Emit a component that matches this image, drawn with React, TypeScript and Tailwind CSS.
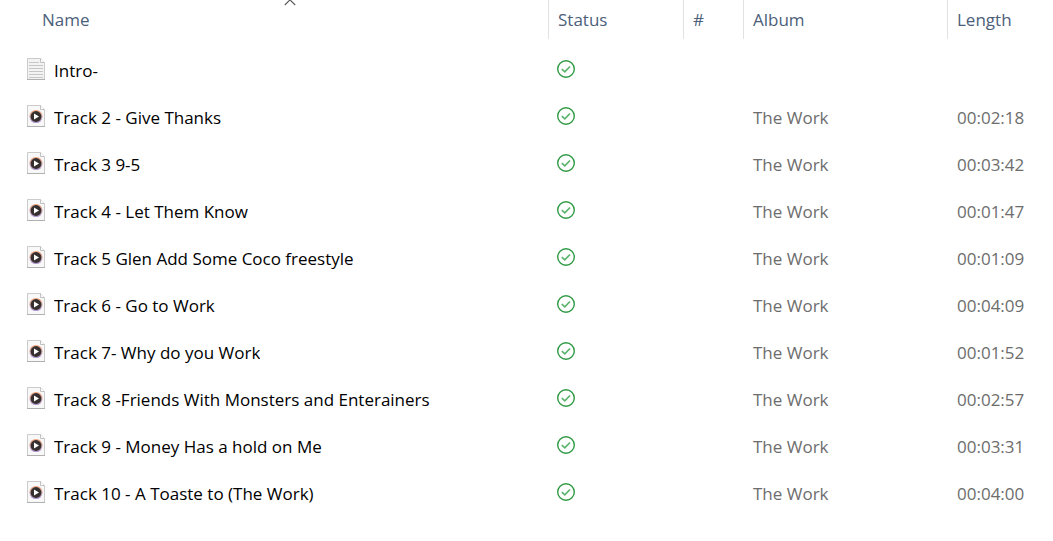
import { useState } from 'react';

interface Track {
  name: string;
  kind: 'text' | 'audio';
  album?: string;
  length?: string;
}

const tracks: Track[] = [
  { name: 'Intro-', kind: 'text' },
  { name: 'Track 2 - Give Thanks', kind: 'audio', album: 'The Work', length: '00:02:18' },
  { name: 'Track 3 9-5', kind: 'audio', album: 'The Work', length: '00:03:42' },
  { name: 'Track 4 - Let Them Know', kind: 'audio', album: 'The Work', length: '00:01:47' },
  { name: 'Track 5 Glen Add Some Coco freestyle', kind: 'audio', album: 'The Work', length: '00:01:09' },
  { name: 'Track 6 - Go to Work', kind: 'audio', album: 'The Work', length: '00:04:09' },
  { name: 'Track 7- Why do you Work', kind: 'audio', album: 'The Work', length: '00:01:52' },
  { name: 'Track 8 -Friends With Monsters and Enterainers', kind: 'audio', album: 'The Work', length: '00:02:57' },
  { name: 'Track 9 - Money Has a hold on Me', kind: 'audio', album: 'The Work', length: '00:03:31' },
  { name: 'Track 10 - A Toaste to (The Work)', kind: 'audio', album: 'The Work', length: '00:04:00' },
];

const columns = [
  { label: 'Status', width: 'w-[135px]' },
  { label: '#', width: 'w-[60px]' },
  { label: 'Album', width: 'w-[204px]' },
  { label: 'Length', width: 'w-[106px]' },
];

const Page = ({ fill }: { fill: string }) => (
  <>
    <path d="M.5.5h13l4 4v17H.5z" fill={fill} stroke="#cbcbcb" />
    <path d="M0 21.5h18" stroke="#b0b0b0" />
    <path d="M13.5.5v4h4" fill="#fff" stroke="#c0c0c0" />
  </>
);

const TextFileIcon = () => (
  <svg width="18" height="22" viewBox="0 0 18 22" aria-hidden="true">
    <Page fill="#f3f3f3" />
    <path d="M2 4.5h10M2 7.5h14M2 10.5h14M2 13.5h14M2 16.5h14M2 19.5h14" stroke="#c6c6c6" />
  </svg>
);

const AudioFileIcon = () => (
  <svg width="18" height="22" viewBox="0 0 18 22" aria-hidden="true">
    <defs>
      <linearGradient id="disc-ring" x1="0" y1="0" x2="0" y2="1">
        <stop offset="0" stopColor="#f0a27a" />
        <stop offset="0.55" stopColor="#d3aeb0" />
        <stop offset="1" stopColor="#a78fd0" />
      </linearGradient>
    </defs>
    <Page fill="#f8f8f9" />
    <circle cx="9" cy="11.5" r="6.6" fill="url(#disc-ring)" />
    <circle cx="9" cy="11.5" r="5.4" fill="#35302f" />
    <path d="M7 8.4v6.2l5-3.1z" fill="#fff" />
  </svg>
);

const SyncedIcon = () => (
  <svg width="18" height="18" viewBox="0 0 18 18" fill="none" role="img" aria-label="Available">
    <circle cx="9" cy="9" r="8.3" stroke="#2f9a44" strokeWidth="1.4" />
    <path d="M4.8 9.2l3 2.7 5.2-5.4" stroke="#5bb36c" strokeWidth="1.7" />
  </svg>
);

export default function App() {
  const [ascending, setAscending] = useState(true);
  const rows = ascending ? tracks : [...tracks].reverse();

  return (
    <main className="min-h-screen bg-white font-['Open_Sans','Noto_Sans',sans-serif] text-[17px] leading-6">
      <table className="w-full table-fixed border-collapse text-left">
        <thead className="text-[#4c607a]">
          <tr className="h-[47px] align-top">
            <th className="p-0 pl-8 font-normal">
              <button
                type="button"
                onClick={() => setAscending(!ascending)}
                className="relative flex h-[39px] w-full items-center pl-[10px]"
              >
                Name
                {/* Sort direction */}
                <svg
                  width="12"
                  height="6"
                  viewBox="0 0 12 6"
                  className={`absolute top-0 left-1/2 -translate-x-1/2 ${ascending ? '' : 'rotate-180'}`}
                  aria-hidden="true"
                >
                  <path d="M.8 5L6 -.2l5.2 5.2" fill="none" stroke="#5a5a5a" strokeWidth="1.1" />
                </svg>
              </button>
            </th>
            {columns.map((column) => (
              <th key={column.label} className={`p-0 font-normal ${column.width}`}>
                <button type="button" className="flex h-[39px] w-full items-center border-l border-[#e2e2e2] pl-[9px]">
                  {column.label}
                </button>
              </th>
            ))}
          </tr>
        </thead>
        <tbody className="text-[#6d6d6d]">
          {rows.map((track) => (
            <tr key={track.name} className="h-[47px]">
              <td className="p-0 pl-[27px] text-black">
                <div className="flex items-center gap-[9px]">
                  <span className="shrink-0 pb-1">
                    {track.kind === 'text' ? <TextFileIcon /> : <AudioFileIcon />}
                  </span>
                  <span className="truncate">{track.name}</span>
                </div>
              </td>
              <td className="p-0 pb-1 pl-[9px]">
                <SyncedIcon />
              </td>
              <td className="p-0" />
              <td className="p-0 pl-[10px]">{track.album}</td>
              <td className="p-0 pl-[10px]">{track.length}</td>
            </tr>
          ))}
        </tbody>
      </table>
    </main>
  );
}
